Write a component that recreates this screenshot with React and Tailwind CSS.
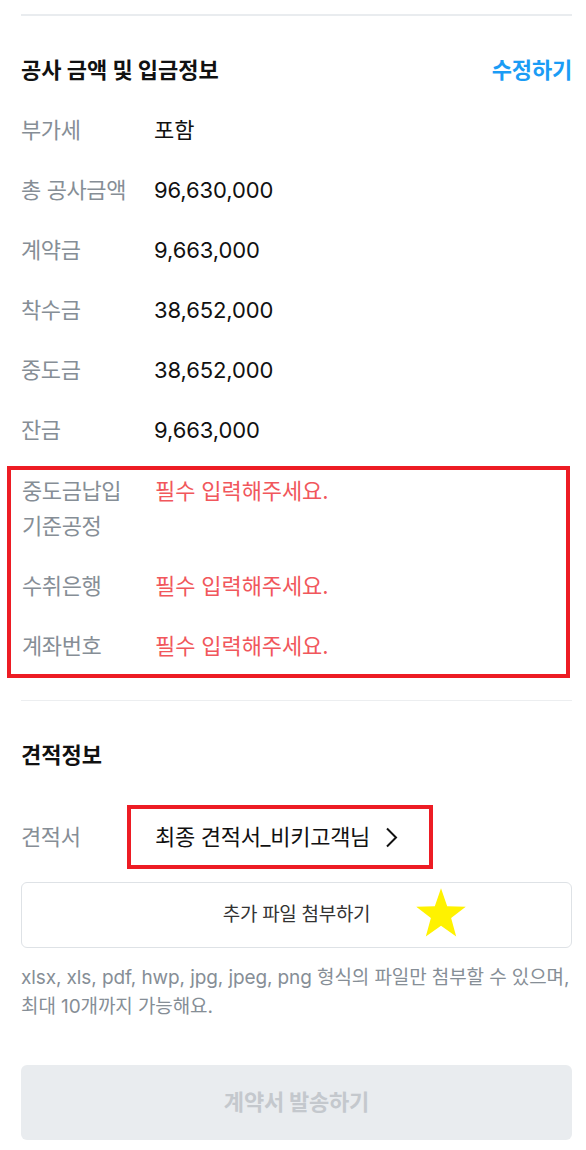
const FONT = { fontFamily: "Inter, 'Noto Sans CJK KR', sans-serif" };

const amounts = [
  ['부가세', '포함'],
  ['총 공사금액', '96,630,000'],
  ['계약금', '9,663,000'],
  ['착수금', '38,652,000'],
  ['중도금', '38,652,000'],
  ['잔금', '9,663,000'],
];

function Row({ label, children, className = '' }) {
  return (
    <div className={`flex items-start ${className}`}>
      <div className="w-[133px] shrink-0 text-[22px] leading-[35px] tracking-[-0.4px] text-[#868e96]">
        {label}
      </div>
      <div className="text-[22px] leading-[35px] tracking-[-0.1px]">{children}</div>
    </div>
  );
}

export default function App() {
  return (
    <div className="min-h-[1150px] w-[586px] bg-white" style={FONT}>
      <div className="pl-[21px] pr-[14px] pt-[14px]">
        <div className="h-[2px] bg-[#e9ecef]" />

        <div className="mt-[38px] flex items-center justify-between">
          <h2 className="text-[22px] font-bold tracking-[0px] text-[#111]">
            공사 금액 및 입금정보
          </h2>
          <button className="text-[22px] font-bold tracking-[-0.2px] text-[#1a9cf5]">
            수정하기
          </button>
        </div>

        <div className="mt-[26px] flex flex-col gap-[25px]">
          {amounts.map(([l, v]) => (
            <Row key={l} label={l}>
              <span className="text-[#111]">{v}</span>
            </Row>
          ))}
        </div>
      </div>

      <div className="ml-[7px] mr-[16px] mt-[18px] border-[4px] border-[#ed1c24] px-[11px] pb-[10px] pt-[4px]">
        <div className="flex flex-col gap-[25px]">
          <Row label={<>중도금납입<br />기준공정</>}>
            <span className="text-[#f1575c]">필수 입력해주세요.</span>
          </Row>
          <Row label="수취은행">
            <span className="text-[#f1575c]">필수 입력해주세요.</span>
          </Row>
          <Row label="계좌번호">
            <span className="text-[#f1575c]">필수 입력해주세요.</span>
          </Row>
        </div>
      </div>

      <div className="pl-[21px] pr-[14px]">
        <div className="mt-[22px] h-px bg-[#eceef0]" />

        <h2 className="mt-[38px] text-[22px] font-bold tracking-[0px] text-[#111]">견적정보</h2>

        <div className="mt-[33px] flex items-center">
          <div className="w-[106px] shrink-0 text-[22px] tracking-[-0.4px] text-[#868e96]">견적서</div>
          <div className="flex h-[64px] w-[306px] items-center border-[4px] border-[#ed1c24] pl-[24px]">
            <span className="text-[22px] tracking-[-0.3px] text-[#111]">최종 견적서_비키고객님</span>
            <svg className="ml-[15px]" width="13" height="21" viewBox="0 0 13 21" fill="none">
              <path d="M2 1.5l9 9-9 9" stroke="#111" strokeWidth="2" />
            </svg>
          </div>
        </div>

        <div className="relative mt-[13px] flex h-[66px] items-center justify-center rounded-[6px] border border-[#dee2e6]">
          <span className="text-[19px] tracking-[-0.3px] text-[#333]">추가 파일 첨부하기</span>
          <svg className="absolute left-[393px] top-[4px]" width="52" height="54" viewBox="0 0 46 48">
            <polygon
              points="23,1 28.5,17 45,17.5 32,27.5 36.5,44 23,34.5 9.5,44 14,27.5 1,17.5 17.5,17"
              fill="#fff200"
            />
          </svg>
        </div>

        <p className="mt-[15px] text-[19px] leading-[29px] tracking-[-0.1px] text-[#868e96]">
          xlsx, xls, pdf, hwp, jpg, jpeg, png 형식의 파일만 첨부할 수 있으며,
          <br />
          최대 10개까지 가능해요.
        </p>

        <button className="mt-[44px] flex h-[75px] w-full items-center justify-center rounded-[6px] bg-[#e9ecef] text-[22px] font-bold tracking-[-0.2px] text-[#c4c8cd]">
          계약서 발송하기
        </button>
      </div>
    </div>
  );
}
